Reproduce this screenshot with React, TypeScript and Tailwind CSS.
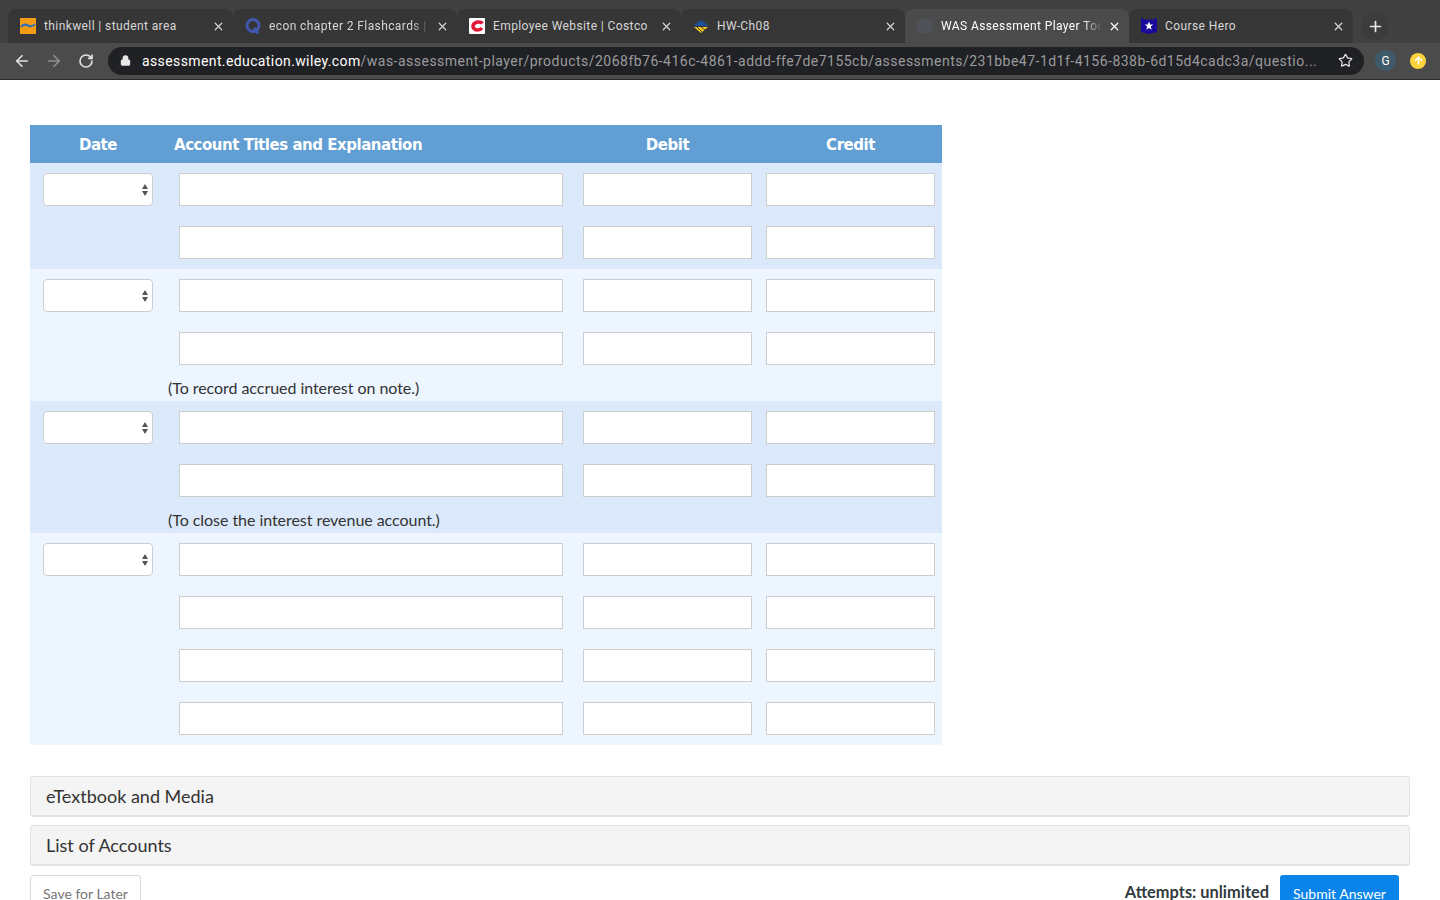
import React from "react";
import { ArrowLeft, ArrowRight, RotateCw, Lock, Star, X, Plus, ArrowUp } from "lucide-react";

const ThinkwellIcon = () => (
  <svg width="16" height="16" viewBox="0 0 16 16">
    <rect width="16" height="16" fill="#f59b14" />
    <path d="M1 9c2-3 4-3 7-1.500s5 1 7-1.500" fill="none" stroke="#2a6fc0" strokeWidth="2" />
  </svg>
);

const QuizletIcon = () => (
  <svg width="16" height="16" viewBox="0 0 16 16">
    <circle cx="8" cy="7.500" r="6" fill="none" stroke="#4257b2" strokeWidth="3" />
    <path d="M9 10l4 5.500" stroke="#4257b2" strokeWidth="3" />
  </svg>
);

const CostcoIcon = () => (
  <svg width="16" height="16" viewBox="0 0 16 16">
    <rect width="16" height="16" rx="1" fill="#fff" />
    <path d="M13.500 5.500C12 3.500 6.500 3 4.500 6.500c-1.500 3 1 5.500 4 5.500 2 0 3.500-.7 4.500-2" fill="none" stroke="#e31837" strokeWidth="3.600" />
  </svg>
);

const WileyPlusIcon = () => (
  <svg width="16" height="16" viewBox="0 0 16 16">
    <path d="M0 8l8-6 8 6z" fill="#1c4f9c" />
    <path d="M1 9h14l-7 6z" fill="#f4c81c" />
    <path d="M4 9l5 5M8 9l4 3" stroke="#3a3a3a" strokeWidth="1" />
  </svg>
);

const HeroIcon = () => (
  <svg width="16" height="16" viewBox="0 0 16 16">
    <path d="M0 0l4 1.500h8l4-1.500v14l-8 2-8-2z" fill="#1a0a9c" />
    <path d="M8 3.500l1.200 3h3l-2.400 2 .9 3.200L8 9.900l-2.700 1.800.9-3.200-2.400-2h3z" fill="#fff" />
  </svg>
);

const BlankIcon = () => <span className="block w-4 h-4 rounded-full bg-[#505259]" />;

type Tab = { title: string; icon: React.ReactNode; active?: boolean; sep?: boolean; first?: boolean; fade?: boolean };

const tabs: Tab[] = [
  { title: "thinkwell | student area", icon: <ThinkwellIcon />, sep: true, first: true },
  { title: "econ chapter 2 Flashcards | Quizlet", icon: <QuizletIcon />, sep: true, fade: true },
  { title: "Employee Website | Costco", icon: <CostcoIcon />, sep: true },
  { title: "HW-Ch08", icon: <WileyPlusIcon /> },
  { title: "WAS Assessment Player Tool", icon: <BlankIcon />, active: true, fade: true },
  { title: "Course Hero", icon: <HeroIcon /> },
];

const TabStrip = () => (
  <div className="h-[43px] bg-[#414141] pt-[9px] pl-2 flex items-stretch">
    {tabs.map((t) => (
      <div
        key={t.title}
        className={`${t.first ? "w-[225px]" : "w-[224px]"} shrink-0 rounded-t-lg pl-3 pr-1 flex items-center ${t.active ? "bg-[#4b4b4b] text-white" : "bg-[#363636] text-[#d6d6d6]"}`}
      >
        <span className="w-4 h-4 shrink-0">{t.icon}</span>
        <span className={`ml-2 flex-1 overflow-hidden whitespace-nowrap text-xs leading-4 font-['Roboto',sans-serif] tracking-[0.4px] ${t.fade ? "[mask-image:linear-gradient(to_right,black_88%,transparent)]" : ""}`}>
          {t.title}
        </span>
        <X size={13} strokeWidth={2.2} className="ml-1.5 mr-1 shrink-0" />
        {t.sep && <span className="ml-1 -mr-[5px] w-px h-[20px] bg-[#6a6a6a] shrink-0" />}
      </div>
    ))}
    <div className="ml-2 mt-[3px] w-7 h-7 rounded-full bg-[#3c3c3c] flex items-center justify-center text-[#e8e8e8]">
      <Plus size={17} strokeWidth={2.4} />
    </div>
  </div>
);

const Toolbar = () => (
  <div className="h-[37px] bg-[#4b4b4b] border-b border-[#2a2a2a] flex items-center pl-[13px] pb-px">
    <ArrowLeft size={18} strokeWidth={2.2} className="text-[#e3e3e3]" />
    <ArrowRight size={18} strokeWidth={2.2} className="ml-[14px] text-[#8f8f8f]" />
    <RotateCw size={16} strokeWidth={2.4} className="ml-[15px] text-[#e3e3e3]" />
    <div className="ml-[14px] w-[1256px] h-7 rounded-full bg-[#202124] flex items-center pl-3 pr-[11px]">
      <Lock size={11} fill="#e8e8e8" strokeWidth={2.5} className="text-[#e8e8e8] shrink-0" />
      <div className="ml-[11px] flex-1 truncate text-sm font-['Roboto',sans-serif] tracking-[0.48px] text-[#9a9b9d]">
        <span className="text-white tracking-[0.39px]">assessment.education.wiley.com</span>
        /was-assessment-player/products/2068fb76-416c-4861-addd-ffe7de7155cb/assessments/231bbe47-1d1f-4156-838b-6d15d4cadc3a/questio...
      </div>
      <Star size={15} strokeWidth={2} className="ml-4 text-[#e3e3e3] shrink-0" />
    </div>
    <div className="ml-[11px] w-[21px] h-[21px] rounded-full bg-[#3f5a6b] text-white text-xs flex items-center justify-center font-['Roboto',sans-serif]">G</div>
    <div className="ml-[14px] w-4 h-4 rounded-full bg-[#fdd33b] flex items-center justify-center">
      <ArrowUp size={11} strokeWidth={3.5} className="text-white" />
    </div>
  </div>
);

const TextBox = ({ w }: { w: string }) => (
  <div className={`${w} h-[33px] shrink-0 bg-white border border-[#cdcdcd]`} />
);

const JournalRow = ({ date }: { date?: boolean }) => (
  <div className="h-[33px] flex pl-[13px]">
    <div className="w-[110px] shrink-0">
      {date && (
        <div className="h-[33px] bg-white border border-[#cdcdcd] rounded-[4px] flex items-center justify-end pr-[3px]">
          <svg width="8" height="14" viewBox="0 0 8 14">
            <path d="M4 1l3 5H1zM4 13L1 8h6z" fill="#555" />
          </svg>
        </div>
      )}
    </div>
    <div className="ml-[26px]"><TextBox w="w-[384px]" /></div>
    <div className="ml-5"><TextBox w="w-[169px]" /></div>
    <div className="ml-[14px]"><TextBox w="w-[169px]" /></div>
  </div>
);

const Group = ({ rows, note, bg }: { rows: number; note?: string; bg: string }) => (
  <div className={`${bg} pt-[10px] ${note ? "" : "pb-[10px]"}`}>
    <div className="flex flex-col gap-5">
      {Array.from({ length: rows }).map((_, i) => (
        <JournalRow key={i} date={i === 0} />
      ))}
    </div>
    {note && (
      <div className="h-[36px] pl-[138px] pt-[13px] text-base leading-[20px] tracking-[-0.05px] text-[#333]">{note}</div>
    )}
  </div>
);

const JournalTable = () => (
  <div className="w-[912px] ml-[30px] mt-[45px]">
    <div className="h-[38px] pt-[2px] bg-[#619ed3] flex items-center text-white font-bold text-[15px] font-['DejaVu_Sans',sans-serif] tracking-[-0.47px]">
      <div className="w-[136px] text-center">Date</div>
      <div className="w-[417px] pl-2">Account Titles and Explanation</div>
      <div className="w-[169px] text-center">Debit</div>
      <div className="w-[169px] ml-[14px] text-center">Credit</div>
    </div>
    <Group rows={2} bg="bg-[#dce9fb]" />
    <Group rows={2} bg="bg-[#edf5fe]" note="(To record accrued interest on note.)" />
    <Group rows={2} bg="bg-[#dce9fb]" note="(To close the interest revenue account.)" />
    <Group rows={4} bg="bg-[#edf5fe]" />
  </div>
);

const Panel = ({ title }: { title: string }) => (
  <div className="h-[41px] bg-[#f4f4f4] border border-[#e2e2e2] border-b-2 rounded-[3px] pl-[15px] flex items-center text-lg text-[#333]">
    {title}
  </div>
);

const App: React.FC = () => (
  <div className="h-[900px] overflow-hidden bg-white font-['Lato',sans-serif]">
    <TabStrip />
    <Toolbar />
    <JournalTable />
    <div className="mx-[30px] mt-[31px] flex flex-col gap-2">
      <Panel title="eTextbook and Media" />
      <Panel title="List of Accounts" />
    </div>
    <div className="mx-[30px] mt-[9px] pr-[11px] flex justify-between items-start">
      <button className="h-10 w-[111px] pb-[3px] bg-white border border-[#dcdcdc] rounded-[3px] text-[#757575] text-sm">
        Save for Later
      </button>
      <div className="flex items-start">
        <span className="mt-[7px] font-bold text-[#333a40] text-[16.400px] leading-5">Attempts: unlimited</span>
        <button className="ml-[11px] h-10 w-[119px] pb-[3px] bg-[#0a84e8] rounded-[3px] text-white text-sm">
          Submit Answer
        </button>
      </div>
    </div>
  </div>
);

export default App;
